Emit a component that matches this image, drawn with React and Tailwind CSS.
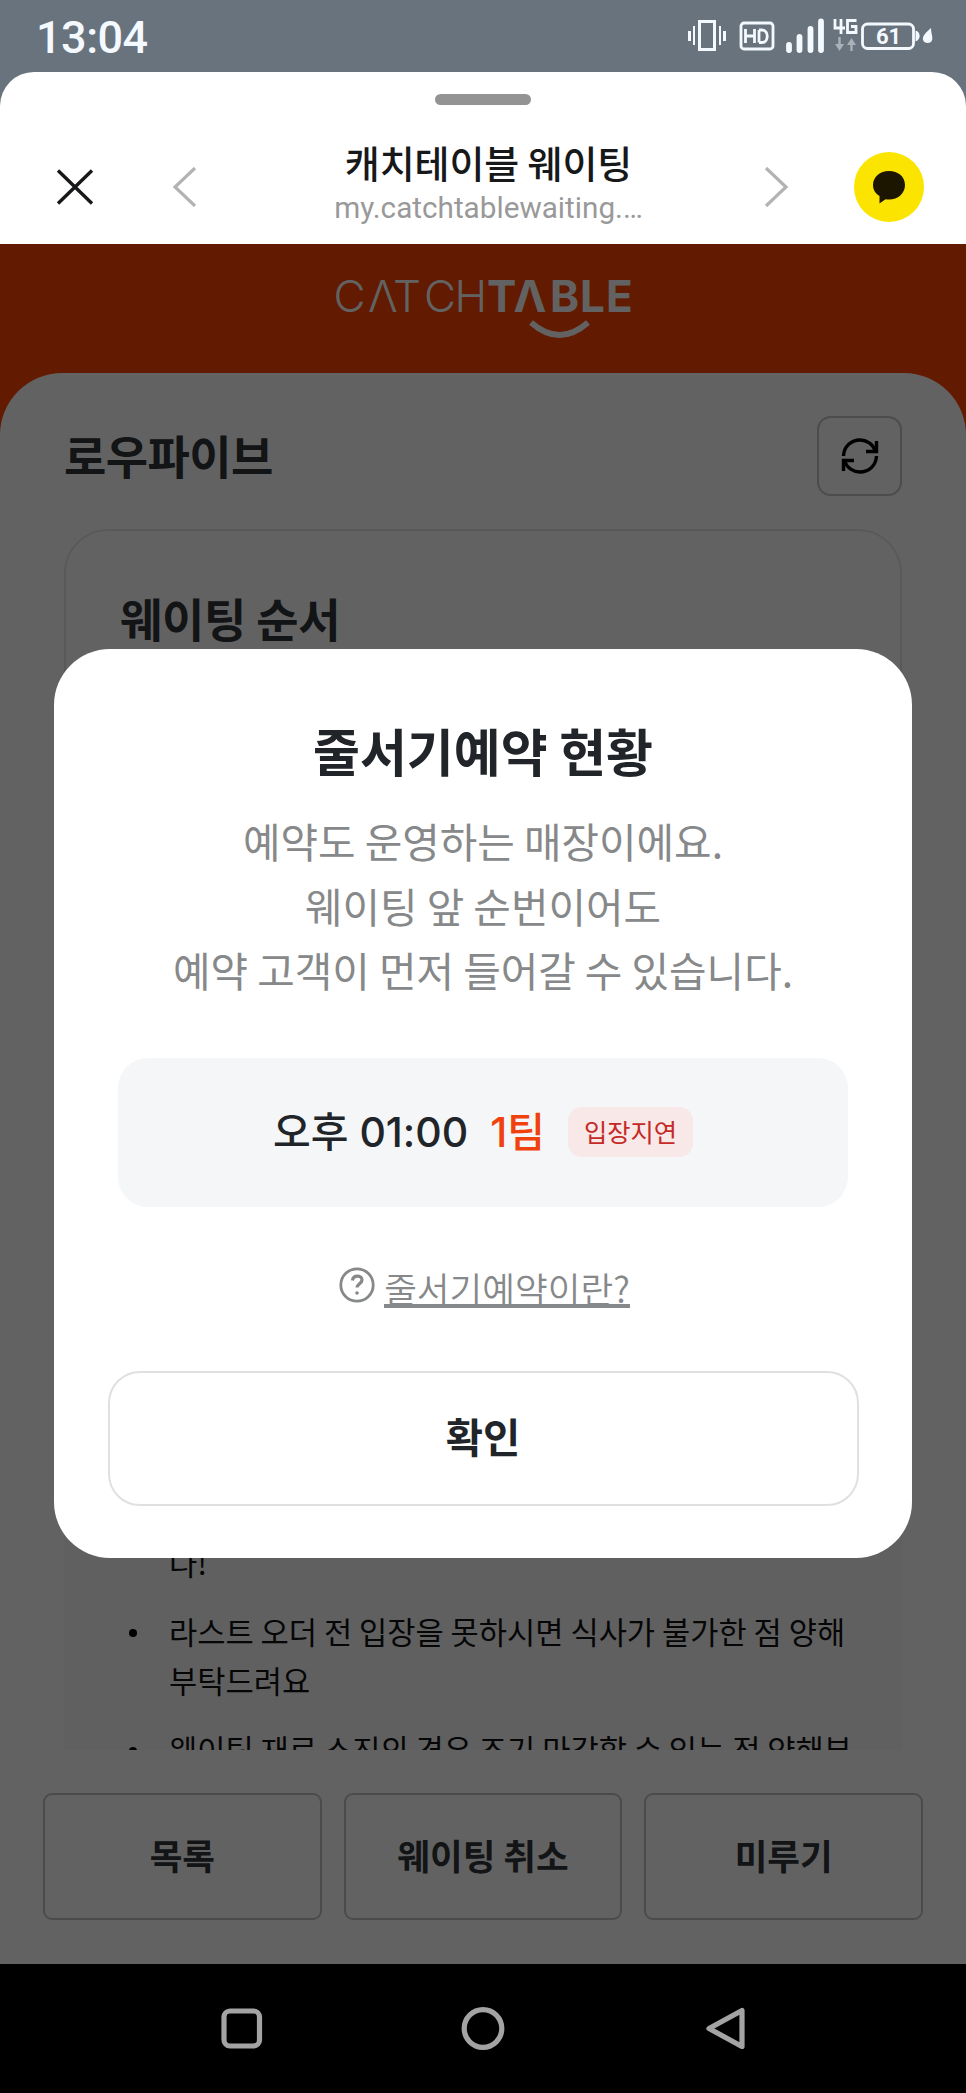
import React from 'react';

const notices = [
  '라스트 오더 전 입장을 못하시면 식사가 불가한 점 양해 부탁드려요',
  '웨이팅 재료 소진의 경우 조기 마감할 수 있는 점 양해부탁드려요',
];

const actions = ['목록', '웨이팅 취소', '미루기'];

const StatusBar = () => (
  <div className="flex h-[72px] items-start justify-between pl-[36px] pr-[33px] text-[#f4f9ff]">
    <span className="mt-[11px] font-[Roboto,sans-serif] text-[45px] leading-[54px] font-medium tracking-[-0.5px]">13:04</span>
    <svg className="mt-[10px]" width="246" height="56" viewBox="686 10 246 56" fill="none" stroke="currentColor">
      {/* vibrate */}
      <rect x="698.500" y="21.500" width="15" height="28" strokeWidth="3" />
      <path d="M693 26v19M719 26v19" strokeWidth="2" />
      <path d="M688.500 31v10M723.500 31v10" strokeWidth="3" />
      {/* HD */}
      <rect x="740" y="23" width="32" height="26" rx="3" strokeWidth="2.800" />
      <path d="M744.500 29v14M753.500 29v14M744.500 36h9M758 30v12.500M758 30h3c7 0 7 12.500 0 12.500h-3" strokeWidth="2.800" />
      {/* signal */}
      <path d="M788 45v5M798.500 37v13M809.500 29v21M820 21.500v28.500" strokeWidth="5.800" strokeLinecap="round" />
      {/* 4G */}
      <path d="M834 19v9h10M840 19v15M855.500 20.500h-9v12h8.500v-6h-5" strokeWidth="2.800" />
      <g className="text-[#a9b1b9]" fill="currentColor" strokeWidth="2.400">
        <path d="M838.500 37v9M850.500 51v-9" />
        <path d="M834 44h9l-4.500 7zM846 45h9l-4.500-7z" stroke="none" />
      </g>
      {/* battery */}
      <rect x="861.500" y="24" width="51" height="24.500" rx="5" strokeWidth="2.800" />
      <path d="M914.500 30.500c5 1 6 9 0 11z" fill="currentColor" stroke="none" />
      <path d="M930 28c-3 3-9 7-8 12 1 3 5 4 8 2 3-3 0-8 0-14z" fill="currentColor" stroke="none" />
      <text x="887.500" y="43.500" textAnchor="middle" fill="currentColor" stroke="none" className="font-[Roboto,sans-serif] text-[22px] font-bold">61</text>
    </svg>
  </div>
);

const BrowserHeader = () => (
  <header className="flex h-[172px] flex-col items-center rounded-t-[34px] bg-white pt-[22px]">
    <div className="h-[11px] w-[96px] rounded-full bg-[#939393]" />
    <div className="mt-[40px] flex w-full items-center justify-between pr-[42px] pl-[56px]">
      <div className="flex w-[141px] items-center justify-between">
        <svg width="38" height="38" viewBox="0 0 38 38" fill="none" stroke="#17181a" strokeWidth="3.400">
          <path d="M2 2.500l34 33M36 2.500L2 35.500" />
        </svg>
        <svg width="25" height="40" viewBox="0 0 25 40" fill="none" stroke="#b3b3b3" strokeWidth="3.200">
          <path d="M23 1L3 20l20 19" />
        </svg>
      </div>
      <div className="-mt-[5px] flex w-[340px] flex-col items-center pl-[16px] whitespace-nowrap">
        <h1 className="text-[38px] leading-[43px] font-medium tracking-[-0.1px] text-[#17181a]">캐치테이블 웨이팅</h1>
        <p className="mt-[5px] font-[Roboto,sans-serif] text-[29.700px] leading-[40px] text-[#999]">my.catchtablewaiting.…</p>
      </div>
      <div className="flex w-[160px] items-center justify-between">
        <svg width="25" height="40" viewBox="0 0 25 40" fill="none" stroke="#b3b3b3" strokeWidth="3.200">
          <path d="M2 1l20 19L2 39" />
        </svg>
        <svg width="70" height="70" viewBox="0 0 70 70">
          <circle cx="35" cy="35" r="35" fill="#fbe400" />
          <path d="M35 19c-9 0-16 6-16 14 0 5 2.500 8.500 6.500 11v7.500l6-4.300c1 .2 2.300.300 3.500.300 9 0 16-6 16-14.500S44 19 35 19z" fill="#1c1600" />
        </svg>
      </div>
    </div>
  </header>
);

const Logo = () => (
  <svg width="320" height="82" viewBox="323 264 320 82" fill="#fff">
    <text x="333.500 368 393 424 454.500" y="311.500" className="font-[Inter,sans-serif] text-[44px] font-light">CΛTCH</text>
    <text x="487 513.500 550 580 606" y="311.500" className="font-[Inter,sans-serif] text-[44px] font-bold">TΛBLE</text>
    <path d="M531 322.500q28.500 25 57 0" fill="none" stroke="#fff" strokeWidth="5.800" />
  </svg>
);

const WaitingPage = () => (
  <main className="relative flex h-[1720px] flex-col overflow-hidden bg-[#ff4400]">
    <div className="flex h-[129px] shrink-0 justify-center pt-[20px]">
      <Logo />
    </div>
    <section className="flex h-[1377px] shrink-0 flex-col overflow-hidden rounded-t-[62px] bg-white px-[64px] pt-[43px]">
      <div className="flex shrink-0 items-center justify-between">
        <h2 className="-mt-[5px] text-[46px] leading-[60px] font-bold tracking-[-0.6px] text-[#2f343a]">로우파이브</h2>
        <button className="flex h-[80px] w-[85px] items-center justify-center rounded-[14px] border-2 border-[#c6c6c6]">
          <svg width="38" height="38" viewBox="0 0 38 38" fill="none" stroke="#000" strokeWidth="3.400">
            <path d="M2.500 19C3 9 10.500 3 19 3c6.500 0 13 4 15.500 11" />
            <path d="M35.500 4v10.500H25" />
            <path d="M35.500 19C35 29 27.500 35 19 35c-6.500 0-13-4-15.500-11" />
            <path d="M2.500 34V23.500H13" />
          </svg>
        </button>
      </div>
      <div className="mt-[33px] h-[700px] shrink-0 rounded-[44px] border-2 border-[#e8e8e8] px-[54px] pt-[56px]">
        <h3 className="text-[46px] leading-[60px] font-bold tracking-[-0.3px] text-[#2f343a]">웨이팅 순서</h3>
      </div>
      <div className="mt-[40px] h-[600px] shrink-0 bg-[#f9f9fb] pt-[269px] pl-[54px]">
        <ul className="flex flex-col gap-[20.500px] text-[30.700px] leading-[48.500px] text-[#111]">
          <li className="pl-[51px]">다!</li>
          {notices.map((notice) => (
            <li key={notice} className="flex">
              <span className="mt-[22px] ml-[11px] h-[8px] w-[8px] shrink-0 rounded-full bg-black" />
              <span className="ml-[32px] w-[690px] break-all">{notice}</span>
            </li>
          ))}
        </ul>
      </div>
    </section>
    <div className="grid h-[214px] shrink-0 grid-cols-3 items-start gap-[22px] bg-white px-[43px] pt-[43px]">
      {actions.map((label) => (
        <button key={label} className="h-[127px] rounded-[9px] border-2 border-[#c3c3c3] pb-[4px] text-[35.500px] font-bold text-[#2f343a]">
          {label}
        </button>
      ))}
    </div>
    <div className="absolute inset-0 flex items-start justify-center bg-black/[0.615] pt-[405px]">
      <ReservationModal />
    </div>
  </main>
);

const ReservationModal = () => (
  <div className="flex h-[909px] w-[858px] flex-col items-center rounded-[56px] bg-white px-[53px] pt-[66px]">
    <h2 className="text-[51px] leading-[70px] font-semibold text-[#212529]">줄서기예약 현황</h2>
    <p className="mt-[24px] text-center text-[40.800px] leading-[64.500px] text-[#868889]">
      예약도 운영하는 매장이에요.
      <br />
      웨이팅 앞 순번이어도
      <br />
      예약 고객이 먼저 들어갈 수 있습니다.
    </p>
    <div className="mt-[55px] flex h-[149px] w-[730px] shrink-0 items-center justify-center rounded-[30px] bg-[#f5f6f8]">
      <span className="mt-[2px] font-[Inter,'Noto_Sans_CJK_KR',sans-serif] text-[41px] font-medium text-[#212529]">오후 01:00</span>
      <span className="mt-[2px] ml-[22px] font-[Inter,'Noto_Sans_CJK_KR',sans-serif] text-[41px] font-medium text-[#f0420f]">1팀</span>
      <span className="ml-[23px] flex h-[50px] w-[125px] items-center justify-center rounded-[14px] bg-[#f9e8e8] pb-[1px] text-[25.300px] text-[#c42a26]">
        입장지연
      </span>
    </div>
    <div className="mt-[59px] ml-[3px] flex items-start text-[#868889]">
      <svg className="mt-[1px]" width="36" height="36" viewBox="0 0 36 36" fill="none" stroke="currentColor" strokeWidth="2.800">
        <circle cx="18" cy="18" r="16.200" />
        <path d="M13.500 13.500c.5-6 9.500-5.500 9.500-.500 0 3.500-5 4-5 7.500" strokeWidth="3.200" />
        <circle cx="18" cy="26" r="1.800" fill="currentColor" stroke="none" />
      </svg>
      <a className="mt-[5px] ml-[9px] border-b-4 border-[#868889] text-[35.600px] leading-[33px] font-[350]">줄서기예약이란?</a>
    </div>
    <button className="mt-[63px] h-[135px] w-[751px] shrink-0 rounded-[32px] border-2 border-[#e0e0e0] pb-[4px] text-[40.500px] font-semibold text-[#212529]">확인</button>
  </div>
);

const NavBar = () => (
  <nav className="flex h-[129px] items-start bg-black pt-[41px] pl-[218px]">
    <svg width="530" height="46" viewBox="218 1987 530 46" fill="none" stroke="#a3a3a3" strokeWidth="5.200">
      <rect x="224" y="1993" width="35.500" height="35" rx="6" />
      <circle cx="483" cy="2010.500" r="18.800" />
      <path d="M742 1992.500v36l-33-18z" strokeLinejoin="round" />
    </svg>
  </nav>
);

const App = () => {
  return (
    <div className="h-[2093px] w-[966px] overflow-hidden bg-[#68737d] font-['Noto_Sans_CJK_KR',sans-serif]">
      <StatusBar />
      <BrowserHeader />
      <WaitingPage />
      <NavBar />
    </div>
  );
};

export default App;
